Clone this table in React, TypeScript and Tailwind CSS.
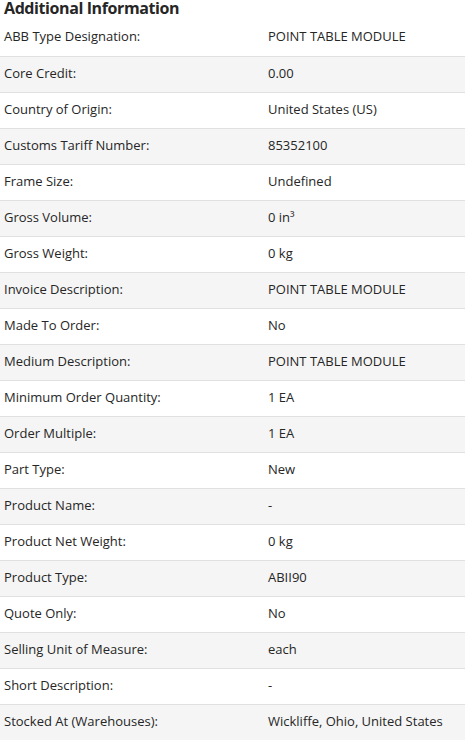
const rows: [string, string][] = [
  ["ABB Type Designation:", "POINT TABLE MODULE"],
  ["Core Credit:", "0.00"],
  ["Country of Origin:", "United States (US)"],
  ["Customs Tariff Number:", "85352100"],
  ["Frame Size:", "Undefined"],
  ["Gross Volume:", "0 in³"],
  ["Gross Weight:", "0 kg"],
  ["Invoice Description:", "POINT TABLE MODULE"],
  ["Made To Order:", "No"],
  ["Medium Description:", "POINT TABLE MODULE"],
  ["Minimum Order Quantity:", "1 EA"],
  ["Order Multiple:", "1 EA"],
  ["Part Type:", "New"],
  ["Product Name:", "-"],
  ["Product Net Weight:", "0 kg"],
  ["Product Type:", "ABII90"],
  ["Quote Only:", "No"],
  ["Selling Unit of Measure:", "each"],
  ["Short Description:", "-"],
  ["Stocked At (Warehouses):", "Wickliffe, Ohio, United States"],
];

export default function App() {
  return (
    <div className="w-[465px] bg-white text-[#262626] font-['Open_Sans',sans-serif]">
      <h2 className="h-[20px] px-[4px] text-[16px] leading-[17px] font-bold tracking-[-0.4px]">
        Additional Information
      </h2>
      <div>
        {rows.map(([label, value], i) => (
          <div
            key={label}
            className={`flex h-[36px] items-center pb-[2px] text-[13px] ${
              i % 2 === 1 ? "bg-[#f5f5f5]" : "bg-white"
            } ${i > 0 ? "border-t border-[#e0e0e0]" : ""}`}
          >
            <div className="w-[268px] pl-[4px]">{label}</div>
            <div className="flex-1">{value}</div>
          </div>
        ))}
      </div>
    </div>
  );
}
